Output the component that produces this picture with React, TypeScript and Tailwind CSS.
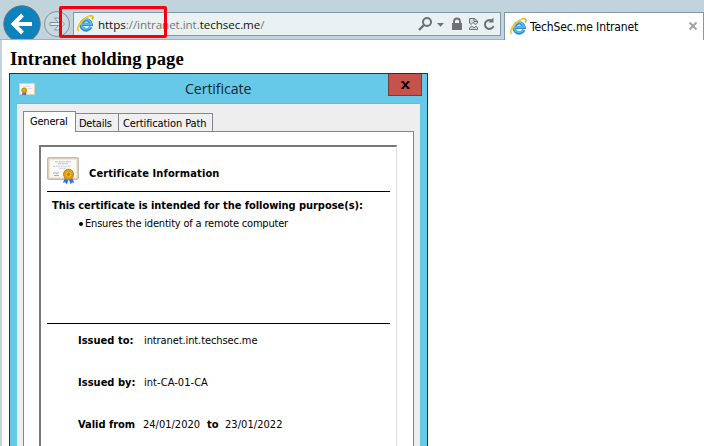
import type { ReactNode } from "react";

const TAHOMA = "font-['DejaVu_Sans_Condensed','DejaVu_Sans',sans-serif] [font-stretch:condensed]";
const SEGOE = "font-['Open_Sans',sans-serif] [font-stretch:normal]";

function IELogo({ className = "" }: { className?: string }) {
  return (
    <svg viewBox="0 0 18 18" className={`h-[17px] w-[17px] shrink-0 ${className}`}>
      <path d="M14.6 12.6A5.3 5.3 0 1 1 15 9.9H5.5" fill="none" stroke="#2b8ccb" strokeWidth="3.6" />
      <path d="M14.1 12.4A5.2 5.2 0 1 1 14.8 9.7H5.5" fill="none" stroke="#5ab8ec" strokeWidth="1.8" />
      <path d="M1.8 16.6C-.3 14.8 2.2 8.8 7.4 4.3 11.6.8 15.8-.1 16.7 1.7c.4.9.1 2.1-.5 3.2" fill="none" stroke="#e9b50b" strokeWidth="1.8" />
      <path d="M1.6 16c-1-2.3 1.6-7.5 6.2-11.4C11.6 1.4 15 .4 16.1 1.6" fill="none" stroke="#ffe04a" strokeWidth=".9" />
    </svg>
  );
}

function CertificateIcon({ className }: { className: string }) {
  return (
    <svg viewBox="0 0 32 28" className={className}>
      <rect x=".5" y=".5" width="31" height="22" rx="1.5" fill="#dccfbb" stroke="#c9baa3" />
      <rect x="2.5" y="2.5" width="27" height="18" fill="#fbfaf7" stroke="#efe7da" />
      <path d="M8 4.8h16M11 6.8h10" stroke="#aeb6cf" strokeWidth=".9" strokeDasharray="3 .6" />
      <path d="M6 9.3h18M12 11.3h7" stroke="#bcc5dd" strokeWidth=".8" strokeDasharray="2 .5" />
      <path d="M6 16.5c2-2 3 1 6-1M7 18.4h5" fill="none" stroke="#8f9cbd" strokeWidth=".9" />
      <path d="m18.3 20-2.4 5.8 2.3-.5 1.6 2.3 2-5.4 1.9 5.4 1.2-2.2 2.4.4-2.6-5.8z" fill="#2d73e4" />
      <circle cx="21.5" cy="17.3" r="5.5" fill="#dda016" />
      <circle cx="21.5" cy="17.3" r="4.9" fill="none" stroke="#b67908" strokeWidth="1" strokeDasharray="1.4 .8" />
      <circle cx="21.5" cy="17.3" r="2.3" fill="#ca8909" stroke="#f2c64c" strokeWidth=".8" />
    </svg>
  );
}

function SmallCertificateIcon() {
  return (
    <svg viewBox="0 0 16 13" className="mt-[9px] ml-[9px] h-[13px] w-4">
      <rect x=".5" y=".5" width="15" height="11" fill="#faf7ee" stroke="#dccfb8" />
      <path d="M4 3.5h8M9 5.5h4" stroke="#d5d6dc" strokeWidth=".8" />
      <path d="M3.5 9 3 12.5l2-1 2 1L7.5 9z" fill="#2d73e4" />
      <circle cx="5.2" cy="7.3" r="2.8" fill="#d4930e" />
      <circle cx="5.2" cy="7.3" r="1" fill="#f0c040" />
    </svg>
  );
}

function NavigationButtons() {
  return (
    <svg viewBox="0 0 71 39" className="h-[39px] w-[71px] shrink-0">
      <circle cx="22" cy="24" r="18.2" fill="#0d82bd" stroke="#5c7887" strokeWidth="1" />
      <path d="M32 24H14M22.5 15 13.5 24l9 9" fill="none" stroke="#fff" strokeWidth="4" />
      <circle cx="57" cy="24" r="12.5" fill="#c8d9e0" stroke="#82949e" strokeWidth="1" />
      <path d="M50 22.5h8.5l-4-4.5h4l6 6-6 6h-4l4-4.5H50z" fill="#dfebef" stroke="#82949e" strokeWidth="1" />
    </svg>
  );
}

function AddressTools() {
  return (
    <svg viewBox="0 0 82 24" className="h-6 w-[82px] shrink-0" fill="none" stroke="#6e7173">
      <circle cx="9" cy="9" r="4" strokeWidth="2" />
      <path d="m6 12-5 5" strokeWidth="2.4" />
      <path d="M19 10h7l-3.5 3.7z" fill="#6e7173" stroke="none" />
      <path d="M36 11V8.5a3 3 0 0 1 6 0V11" strokeWidth="1.8" />
      <path d="M34 10h10v7H34z" fill="#6e7173" stroke="none" />
      <path d="M51.5 10V5.5h5l3 2.5v2l-2 1.5-2.5-2-2 2z" fill="#d3d8da" strokeWidth="1" />
      <path d="M51.5 16.5V15l2-2 2.5 2 2-2 1.5 2v1.5z" fill="#d3d8da" strokeWidth="1" />
      <path d="M56 5.5v3h3" strokeWidth="1" />
      <path d="M73.8 7.8a4.4 4.4 0 1 0 1.7 5.2" strokeWidth="2" />
      <path d="M70.5 9.5h5v-5z" fill="#6e7173" stroke="none" />
    </svg>
  );
}

function Field({ label, labelClass, children }: { label: string; labelClass: string; children: ReactNode }) {
  return (
    <div className="flex h-[42px] pl-[31px]">
      <span className={`w-[65px] font-bold ${labelClass}`}>{label}</span>
      {children}
    </div>
  );
}

function CertificateDialog() {
  return (
    <section className="ml-[7px] flex h-[400px] w-[419px] shrink-0 flex-col border border-b-0 border-[#22333e] bg-[#66c9e8]">
      <header className="flex h-[29px] shrink-0">
        <SmallCertificateIcon />
        <h2 className={`flex-1 pt-1 pl-[150px] text-[14.2px] leading-[22px] tracking-[-0.1px] text-[#17272f] ${SEGOE}`}>Certificate</h2>
        <button className="mr-[5px] flex h-[22px] w-[34px] items-center justify-center border border-t-0 border-[#713d3a] bg-[#c5534c]">
          <svg viewBox="0 0 10 8" className="h-2 w-[9px]" fill="none" stroke="#000" strokeWidth="2">
            <path d="m1.5 0 7 8m0-8-7 8" />
            <path d="M0 .5h3.5m3 0H10M0 7.5h3.5m3 0H10" strokeWidth="1" />
          </svg>
        </button>
      </header>
      <div className="mx-[7px] flex flex-1 flex-col border-t border-[#83aec3] bg-[#eeeeee] px-[6px] pt-[7px]">
        <nav className="z-10 flex h-[21px] items-end">
          <div className="h-[21px] w-[53px] border border-b-0 border-[#828790] bg-white pt-[3px] pl-[6px] tracking-[-0.2px]">General</div>
          <div className="mb-px h-[18px] w-[43px] border border-b-0 border-l-0 border-[#828790] bg-[#f0f0f0] pt-px pl-[3px] leading-[17px] tracking-[-0.25px]">Details</div>
          <div className="mb-px h-[18px] w-[94px] border border-b-0 border-l-0 border-[#828790] bg-[#f0f0f0] pt-px pl-[4px] leading-[17px] tracking-[-0.1px]">Certification Path</div>
        </nav>
        <div className="-mt-px flex-1 border border-b-0 border-[#828790] bg-white pt-[13px] pl-[15px]">
          <div className="h-[302px] w-[358px] border-t-2 border-l-2 border-r border-t-[#777] border-l-[#777] border-r-[#dedede] pl-[6px]">
            <div className="flex h-[45px] w-[343px] border-b border-black">
              <CertificateIcon className="mt-[10px] h-7 w-8" />
              <h3 className="pt-[20px] pl-[10px] font-bold tracking-[0.12px]">Certificate Information</h3>
            </div>
            <div className="h-[132px] w-[343px] border-b border-black pt-[7px] pl-[5px]">
              <p className="font-bold tracking-[-0.05px]">This certificate is intended for the following purpose(s):</p>
              <div className="mt-[4px] flex items-center pl-[27px]">
                <i className="mr-[2px] h-1 w-1 rounded-full bg-black" />
                <span className="tracking-[-0.19px]">Ensures the identity of a remote computer</span>
              </div>
            </div>
            <div className="pt-[10px]">
              <Field label="Issued to:" labelClass="tracking-[0.02px]">
                <span className="pl-px tracking-[-0.1px]">intranet.int.techsec.me</span>
              </Field>
              <Field label="Issued by:" labelClass="tracking-[0.03px]">
                <span className="pl-px tracking-[0.05px]">int-CA-01-CA</span>
              </Field>
              <Field label="Valid from" labelClass="tracking-[-0.02px]">
                <span className="w-[64px]">24/01/2020</span>
                <b className="w-[18px]">to</b>
                <span className="tracking-[0.05px]">23/01/2022</span>
              </Field>
            </div>
          </div>
        </div>
      </div>
    </section>
  );
}

export default function App() {
  return (
    <main className={`relative flex h-[446px] w-[704px] flex-col overflow-hidden bg-[#c1d4dc] text-[11px] leading-[14px] whitespace-nowrap text-black ${TAHOMA}`}>
      <header className="flex h-10 shrink-0 border-b border-[#a7b0b5]">
        <NavigationButtons />
        <div className="mt-3 flex h-6 w-[428px] ml-[2px] border border-[#8099a8] bg-[#e9f1f3]">
          <IELogo className="mt-[2px] ml-[3px]" />
          <span className={`flex-1 pt-[3px] pl-1 text-[11.6px] leading-[18px] tracking-[-0.06px] text-[#777] ${SEGOE}`}>
            <span className="text-[#111]">https</span>://intranet.int.<span className="text-[#111]">techsec.me</span>/
          </span>
          <AddressTools />
        </div>
        <div className="mt-3 ml-[3px] flex h-[28px] w-[200px] border border-b-0 border-[#8099a8] bg-white">
          <IELogo className="mt-[5px] ml-[5px]" />
          <span className="pt-[7px] pl-[3px] text-[12px] leading-[14px] tracking-[-0.12px]">TechSec.me Intranet</span>
          <svg viewBox="0 0 8 8" className="mt-[9px] mr-[6px] ml-auto h-2 w-2" stroke="#a2a2a2" strokeWidth="2">
            <path d="m.5.5 7 7m0-7-7 7" />
          </svg>
        </div>
      </header>
      <div className="ml-[2px] flex flex-1 flex-col bg-white">
        <h1 className="h-[33px] shrink-0 pt-[8px] pl-[8px] font-['Liberation_Serif',serif] text-[18.67px] leading-[22px] font-bold tracking-[0.03px]">Intranet holding page</h1>
        <CertificateDialog />
      </div>
      <div className="absolute top-[6px] left-[59px] h-[32px] w-[108px] rounded-[2px] border-[3px] border-[#f80009]" />
    </main>
  );
}
